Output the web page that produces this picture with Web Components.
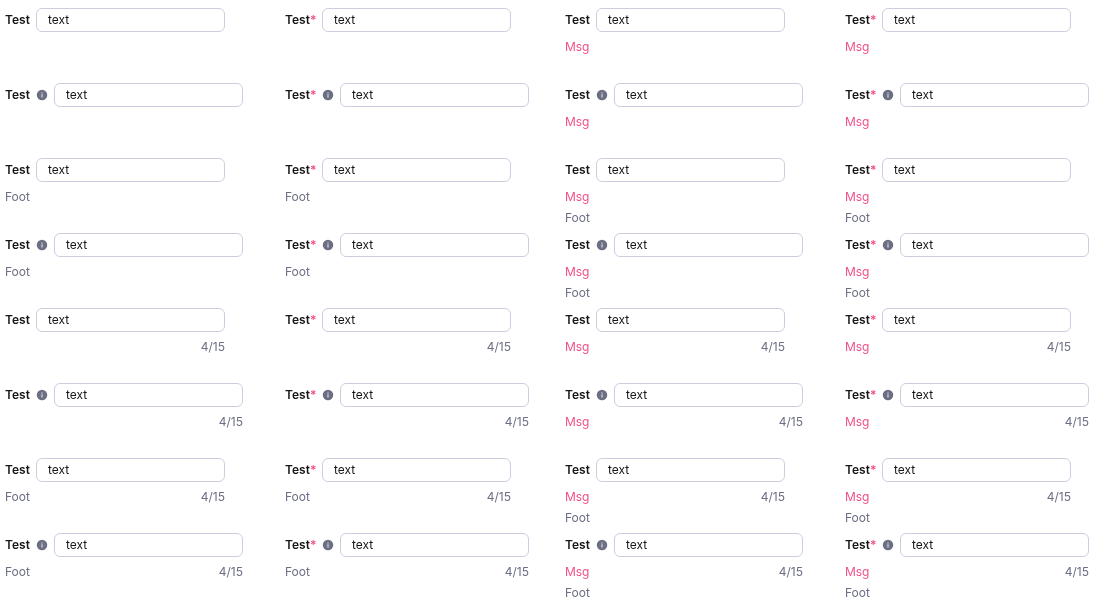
<!DOCTYPE html>
<html lang="en">
<head>
<meta charset="utf-8">
<title>Form fields</title>
<style>
html,body{margin:0;height:600px;overflow:hidden;background:#fff}
body{font-family:Inter,sans-serif;font-size:12px;color:#161616}
</style>
</head>
<body>
<field-grid></field-grid>
<script>
class InfoIcon extends HTMLElement {
  connectedCallback() {
    this.attachShadow({mode: 'open'}).innerHTML = `
      <style>:host{display:block;width:12px;height:12px}svg{display:block}</style>
      <svg width="12" height="12" viewBox="0 0 12 12"><circle cx="6" cy="6" r="5.25" fill="#6c6f84"/><path d="M5.35 3.4h1.3v1.2h-1.3zM5.4 5.3h1.2v3.3h-1.2z" fill="#fff" fill-opacity=".75"/></svg>`;
  }
}
customElements.define('info-icon', InfoIcon);

class FormField extends HTMLElement {
  connectedCallback() {
    const has = n => this.hasAttribute(n);
    this.attachShadow({mode: 'open'}).innerHTML = `
      <style>
        :host{display:block;width:max-content}
        .row{display:flex;align-items:center;height:24px}
        .label{font-weight:600;line-height:24px;white-space:nowrap;display:flex;width:25px}
        :host([required]) .label{width:31px}
        .req{color:#f0508a}
        info-icon{margin-left:6px}
        .input{box-sizing:border-box;width:189px;height:24px;margin-left:6px;padding:0 11px;border:1px solid #cdcddf;border-radius:6px;line-height:22px}
        .meta{display:flex;justify-content:space-between;line-height:18px;margin-top:6px;color:#6c6f84}
        .msg{color:#f0508a;letter-spacing:-.1px}
        .foot{line-height:18px;margin-top:3px;color:#6c6f84}
        .meta > .foot{margin-top:0}
        .count{margin-left:auto}
      </style>
      <div class="row">
        <div class="label"><slot></slot>${has('required') ? '<span class="req">*</span>' : ''}</div>
        ${has('info') ? '<info-icon></info-icon>' : ''}
        <div class="input">text</div>
      </div>
      <div class="meta">
        ${has('message') ? '<span class="msg">Msg</span>' : has('footer') ? '<span class="foot">Foot</span>' : ''}
        ${has('counter') ? '<span class="count">4/15</span>' : ''}
      </div>
      ${has('message') && has('footer') ? '<div class="foot">Foot</div>' : ''}`;
  }
}
customElements.define('form-field', FormField);

class FieldGrid extends HTMLElement {
  connectedCallback() {
    let fields = '';
    for (let row = 0; row < 8; row++) {
      for (let col = 0; col < 4; col++) {
        const a = [col & 1 && 'required', col & 2 && 'message', row & 1 && 'info', row & 2 && 'footer', row & 4 && 'counter'];
        fields += `<form-field ${a.filter(Boolean).join(' ')}>Test</form-field>`;
      }
    }
    this.attachShadow({mode: 'open'}).innerHTML = `
      <style>:host{display:grid;grid-template-columns:repeat(4,280px);grid-auto-rows:75px;will-change:transform}form-field{padding:8px 0 0 5px}</style>${fields}`;
  }
}
customElements.define('field-grid', FieldGrid);
</script>
</body>
</html>
